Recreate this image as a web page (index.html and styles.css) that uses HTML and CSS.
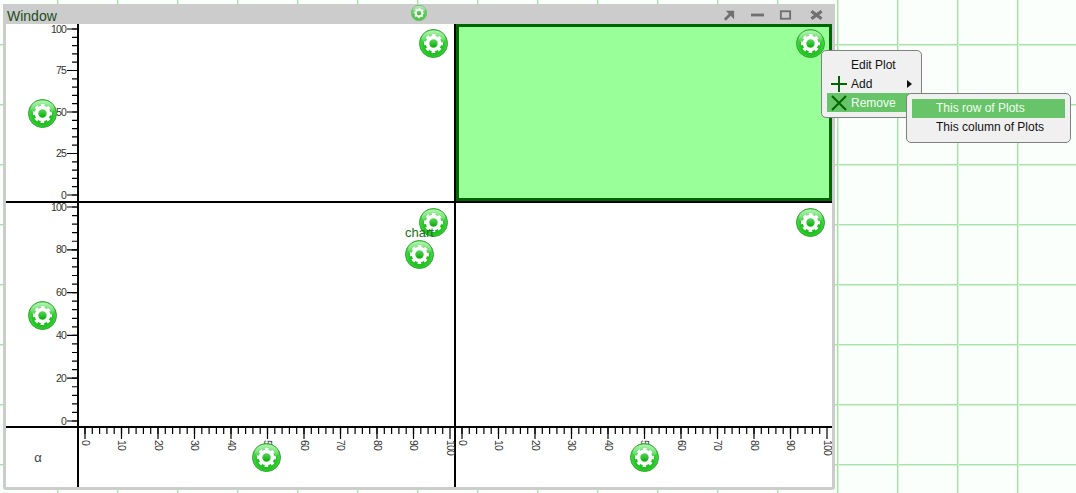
FILE: index.html
```html
<!DOCTYPE html>
<html lang="en">
<head>
<meta charset="utf-8">
<title>Window</title>
<link rel="stylesheet" href="styles.css">
</head>
<body>
<svg class="defs" aria-hidden="true">
  <defs>
    <radialGradient id="ball" cx="50%" cy="58%" r="56%">
      <stop offset="0" stop-color="#12b012"/>
      <stop offset=".6" stop-color="#22c422"/>
      <stop offset=".88" stop-color="#48d848"/>
      <stop offset="1" stop-color="#58d858"/>
    </radialGradient>
    <linearGradient id="shine" x1="0" y1="0" x2="0" y2="1">
      <stop offset="0" stop-color="#dcffdc" stop-opacity=".7"/>
      <stop offset="1" stop-color="#dcffdc" stop-opacity=".05"/>
    </linearGradient>
    <symbol id="gear" viewBox="0 0 29 29">
      <circle cx="14.5" cy="14.5" r="14" fill="url(#ball)" stroke="#2ea62e" stroke-width="1"/>
      <ellipse cx="14.5" cy="9" rx="11.5" ry="7.500" fill="url(#shine)"/>
      <circle cx="14.5" cy="14.5" r="6" fill="none" stroke="#fff" stroke-width="3.6"/>
      <circle cx="14.5" cy="14.5" r="8.3" fill="none" stroke="#fff" stroke-width="2.4" stroke-dasharray="3.6 2.92" stroke-dashoffset="1.8"/>
    </symbol>
    <symbol id="xaxis" viewBox="0 0 376 58">
      <path class="tick" d="M6 0v6m7.3-6v6m7.3-6v6m7.3-6v6m7.3-6v6m7.3-6v6m7.3-6v6m7.3-6v6m7.3-6v6m7.3-6v6m7.3-6v6m7.3-6v6m7.3-6v6m7.3-6v6m7.3-6v6m7.3-6v6m7.3-6v6m7.3-6v6m7.3-6v6m7.3-6v6m7.3-6v6m7.3-6v6m7.3-6v6m7.3-6v6m7.3-6v6m7.3-6v6m7.3-6v6m7.3-6v6m7.3-6v6m7.3-6v6m7.3-6v6m7.3-6v6m7.3-6v6m7.3-6v6m7.3-6v6m7.3-6v6m7.3-6v6m7.3-6v6m7.3-6v6m7.3-6v6m7.3-6v6m7.3-6v6m7.3-6v6m7.3-6v6m7.3-6v6m7.3-6v6m7.3-6v6m7.3-6v6m7.3-6v6m7.3-6v6"/>
      <path class="tick" d="M6 0v11m36.5-11v11m36.5-11v11m36.5-11v11m36.5-11v11m36.5-11v11m36.5-11v11m36.5-11v11m36.5-11v11m36.5-11v11m36.5-11v11"/>
      <text class="label" transform="translate(2.5 12) rotate(90)">0</text>
      <text class="label" transform="translate(39 12) rotate(90)">10</text>
      <text class="label" transform="translate(75.5 12) rotate(90)">20</text>
      <text class="label" transform="translate(112 12) rotate(90)">30</text>
      <text class="label" transform="translate(148.5 12) rotate(90)">40</text>
      <text class="label" transform="translate(185 12) rotate(90)">50</text>
      <text class="label" transform="translate(221.5 12) rotate(90)">60</text>
      <text class="label" transform="translate(258 12) rotate(90)">70</text>
      <text class="label" transform="translate(294.5 12) rotate(90)">80</text>
      <text class="label" transform="translate(331 12) rotate(90)">90</text>
      <text class="label" transform="translate(367.5 12) rotate(90)">100</text>
    </symbol>
  </defs>
</svg>

<div class="window">
  <header class="titlebar">
    <span class="title">Window</span>
    <svg class="gear gear-title"><use href="#gear"/></svg>
    <div class="controls">
      <svg class="ctl" viewBox="0 0 14 14"><path d="M3 2.5h9v9z" fill="#707070"/><path d="M9 5 2 12" fill="none" stroke="#707070" stroke-width="3"/></svg>
      <svg class="ctl" viewBox="0 0 14 14"><path d="M0 7h14" stroke="#707070" stroke-width="3"/></svg>
      <svg class="ctl" viewBox="0 0 14 14"><rect x="2" y="3" width="10" height="8" fill="none" stroke="#707070" stroke-width="2"/></svg>
      <svg class="ctl ctl-close" viewBox="0 0 14 14"><path d="M1.500 3l11 8M12.500 3l-11 8" stroke="#707070" stroke-width="3.500"/></svg>
    </div>
  </header>

  <div class="chart">
    <div class="cell axis-cell">
      <svg class="axis" width="71" height="177" viewBox="0 0 71 177">
        <path class="tick" d="M66 5h5m-5 8.3h5m-5 8.3h5m-5 8.3h5m-5 8.3h5m-5 8.3h5m-5 8.3h5m-5 8.3h5m-5 8.3h5m-5 8.3h5m-5 8.3h5m-5 8.3h5m-5 8.3h5m-5 8.3h5m-5 8.3h5m-5 8.3h5m-5 8.3h5m-5 8.3h5m-5 8.3h5m-5 8.3h5m-5 8.3h5"/>
        <path class="tick" d="M61 5h10m-10 41.5h10m-10 41.5h10m-10 41.5h10m-10 41.5h10"/>
        <text class="label end" x="60" y="8.5">100</text>
        <text class="label end" x="60" y="50">75</text>
        <text class="label end" x="60" y="91.5">50</text>
        <text class="label end" x="60" y="133">25</text>
        <text class="label end" x="60" y="174.5">0</text>
      </svg>
      <svg class="gear"><use href="#gear"/></svg>
    </div>
    <div class="cell plot"><svg class="gear gear-corner"><use href="#gear"/></svg></div>
    <div class="cell plot plot-selected"><svg class="gear gear-corner gear-selected"><use href="#gear"/></svg></div>

    <div class="cell axis-cell">
      <svg class="axis" width="71" height="223" viewBox="0 0 71 223">
        <path class="tick" d="M66 4h5m-5 8.56h5m-5 8.56h5m-5 8.56h5m-5 8.56h5m-5 8.56h5m-5 8.56h5m-5 8.56h5m-5 8.56h5m-5 8.56h5m-5 8.56h5m-5 8.56h5m-5 8.56h5m-5 8.56h5m-5 8.56h5m-5 8.56h5m-5 8.56h5m-5 8.56h5m-5 8.56h5m-5 8.56h5m-5 8.56h5m-5 8.56h5m-5 8.56h5m-5 8.56h5m-5 8.56h5m-5 8.56h5"/>
        <path class="tick" d="M61 4h10m-10 42.8h10m-10 42.8h10m-10 42.8h10m-10 42.8h10m-10 42.8h10"/>
        <text class="label end" x="60" y="8">100</text>
        <text class="label end" x="60" y="50.3">80</text>
        <text class="label end" x="60" y="93.1">60</text>
        <text class="label end" x="60" y="135.9">40</text>
        <text class="label end" x="60" y="178.7">20</text>
        <text class="label end" x="60" y="221.5">0</text>
      </svg>
      <svg class="gear"><use href="#gear"/></svg>
    </div>
    <div class="cell plot">
      <svg class="gear gear-corner"><use href="#gear"/></svg>
      <div class="node">
        <span class="node-label">chart</span>
        <svg class="gear"><use href="#gear"/></svg>
      </div>
    </div>
    <div class="cell plot plot-edge"><svg class="gear gear-corner"><use href="#gear"/></svg></div>

    <div class="cell axis-cell alpha">α</div>
    <div class="cell x-cell">
      <svg class="axis" width="376" height="58"><use href="#xaxis"/></svg>
      <svg class="gear"><use href="#gear"/></svg>
    </div>
    <div class="cell x-cell">
      <svg class="axis" width="376" height="58"><use href="#xaxis"/></svg>
      <svg class="gear"><use href="#gear"/></svg>
    </div>
  </div>

  <div class="menu">
    <div class="item item-plain">Edit Plot</div>
    <div class="item">
      <svg class="item-icon" viewBox="0 0 16 16"><path d="M8 0v16M0 8h16" stroke="#006600" stroke-width="2"/></svg>
      <span>Add</span>
      <span class="arrow"></span>
    </div>
    <div class="item item-active">
      <svg class="item-icon" viewBox="0 0 16 16"><path d="M1 1l14 14M15 1 1 15" stroke="#006600" stroke-width="2"/></svg>
      <span>Remove</span>
      <div class="menu submenu">
        <div class="item item-plain item-active item-tight">This row of Plots</div>
        <div class="item item-plain item-tight">This column of Plots</div>
      </div>
    </div>
  </div>
</div>
</body>
</html>
```

FILE: styles.css
```css
html, body {
  margin: 0;
  height: 493px;
  overflow: hidden;
}

body {
  background-color: #fbfffb;
  background-image:
    linear-gradient(to right, #a6e4a6 1px, #d6f3d6 1px, #d6f3d6 2px, transparent 2px),
    linear-gradient(to bottom, #a6e4a6 1px, #d6f3d6 1px, #d6f3d6 2px, transparent 2px);
  background-size: 60px 60px;
  background-position: -3px -16px;
  font-family: "Liberation Sans", Arial, sans-serif;
  padding-top: 4px;
  box-sizing: border-box;
}

.defs {
  position: absolute;
  width: 0;
  height: 0;
}

.window {
  position: relative;
  width: 832px;
  height: 486px;
  margin-left: 3px;
  padding: 0 3px 3px 3px;
  box-sizing: border-box;
  background: #cccccc;
  border-radius: 0 0 3px 3px;
  display: flex;
  flex-direction: column;
}

.titlebar {
  height: 20px;
  flex: none;
  display: grid;
  grid-template-columns: 1fr auto 1fr;
  align-items: center;
}

.title {
  font-size: 14px;
  color: #1d4d1d;
  padding-left: 1px;
  padding-top: 3px;
}

.gear {
  width: 29px;
  height: 29px;
  flex: none;
}

.gear-title {
  width: 16px;
  height: 16px;
  margin-top: -2px;
  opacity: .75;
}

.controls {
  display: flex;
  justify-content: flex-end;
  align-items: center;
  gap: 15px;
  padding-right: 9px;
  padding-top: 1px;
}

.ctl {
  width: 13px;
  height: 14px;
}

.ctl-close {
  margin-left: 3px;
}

.chart {
  flex: 1;
  display: grid;
  grid-template-columns: 71px 375px 376px;
  grid-template-rows: 177px 223px 1fr;
  gap: 2px;
  background: #000;
}

.cell {
  position: relative;
  background: #fff;
}

.axis-cell,
.x-cell {
  display: flex;
  align-items: center;
  justify-content: center;
}

.axis-cell .gear {
  position: relative;
  margin: 1px 0 0 1px;
}

.x-cell .gear {
  position: relative;
  margin-top: -1px;
}

.axis {
  position: absolute;
  left: 0;
  top: 0;
  overflow: visible;
}

.tick {
  stroke: #000;
  stroke-width: 1.2;
  fill: none;
}

.label {
  font-size: 10.500px;
  letter-spacing: -.8px;
  fill: #333;
}

.end {
  text-anchor: end;
}

.alpha {
  font-size: 13px;
  color: #444;
  padding-right: 7px;
  box-sizing: border-box;
}

.plot-selected {
  background: #99ff99;
  border: 3px solid #006600;
}

.gear-corner {
  position: absolute;
  top: 5px;
  right: 6px;
}

.plot-selected .gear-corner {
  top: 2px;
  right: 4px;
}

.plot-edge .gear-corner {
  right: 7px;
}

.gear-selected {
  z-index: 3;
}

.node {
  position: absolute;
  top: 22px;
  right: 20px;
  display: flex;
  flex-direction: column;
  align-items: center;
}

.node-label {
  font-size: 13px;
  line-height: 15px;
  color: #217021;
}

.menu {
  position: absolute;
  left: 818px;
  top: 46px;
  z-index: 2;
  width: 101px;
  padding: 4px 5px 5px;
  box-sizing: border-box;
  background: #f0f0f0;
  border: 1px solid #808080;
  border-radius: 5px;
}

.item {
  position: relative;
  display: flex;
  align-items: center;
  gap: 4px;
  height: 19px;
  padding: 0 4px;
  font-size: 12px;
  color: #111;
}

.item-plain {
  padding-left: 24px;
}

.item-tight {
  padding-bottom: 2px;
  box-sizing: border-box;
}

.item-active {
  background: #68c468;
  color: #f2fff2;
}

.item-icon {
  width: 16px;
  height: 16px;
  flex: none;
}

.arrow {
  margin-left: auto;
  width: 0;
  height: 0;
  border-left: 5px solid #111;
  border-top: 4.500px solid transparent;
  border-bottom: 4.500px solid transparent;
}

.submenu {
  left: 79px;
  top: 0;
  width: 165px;
  padding: 5px;
}
```
